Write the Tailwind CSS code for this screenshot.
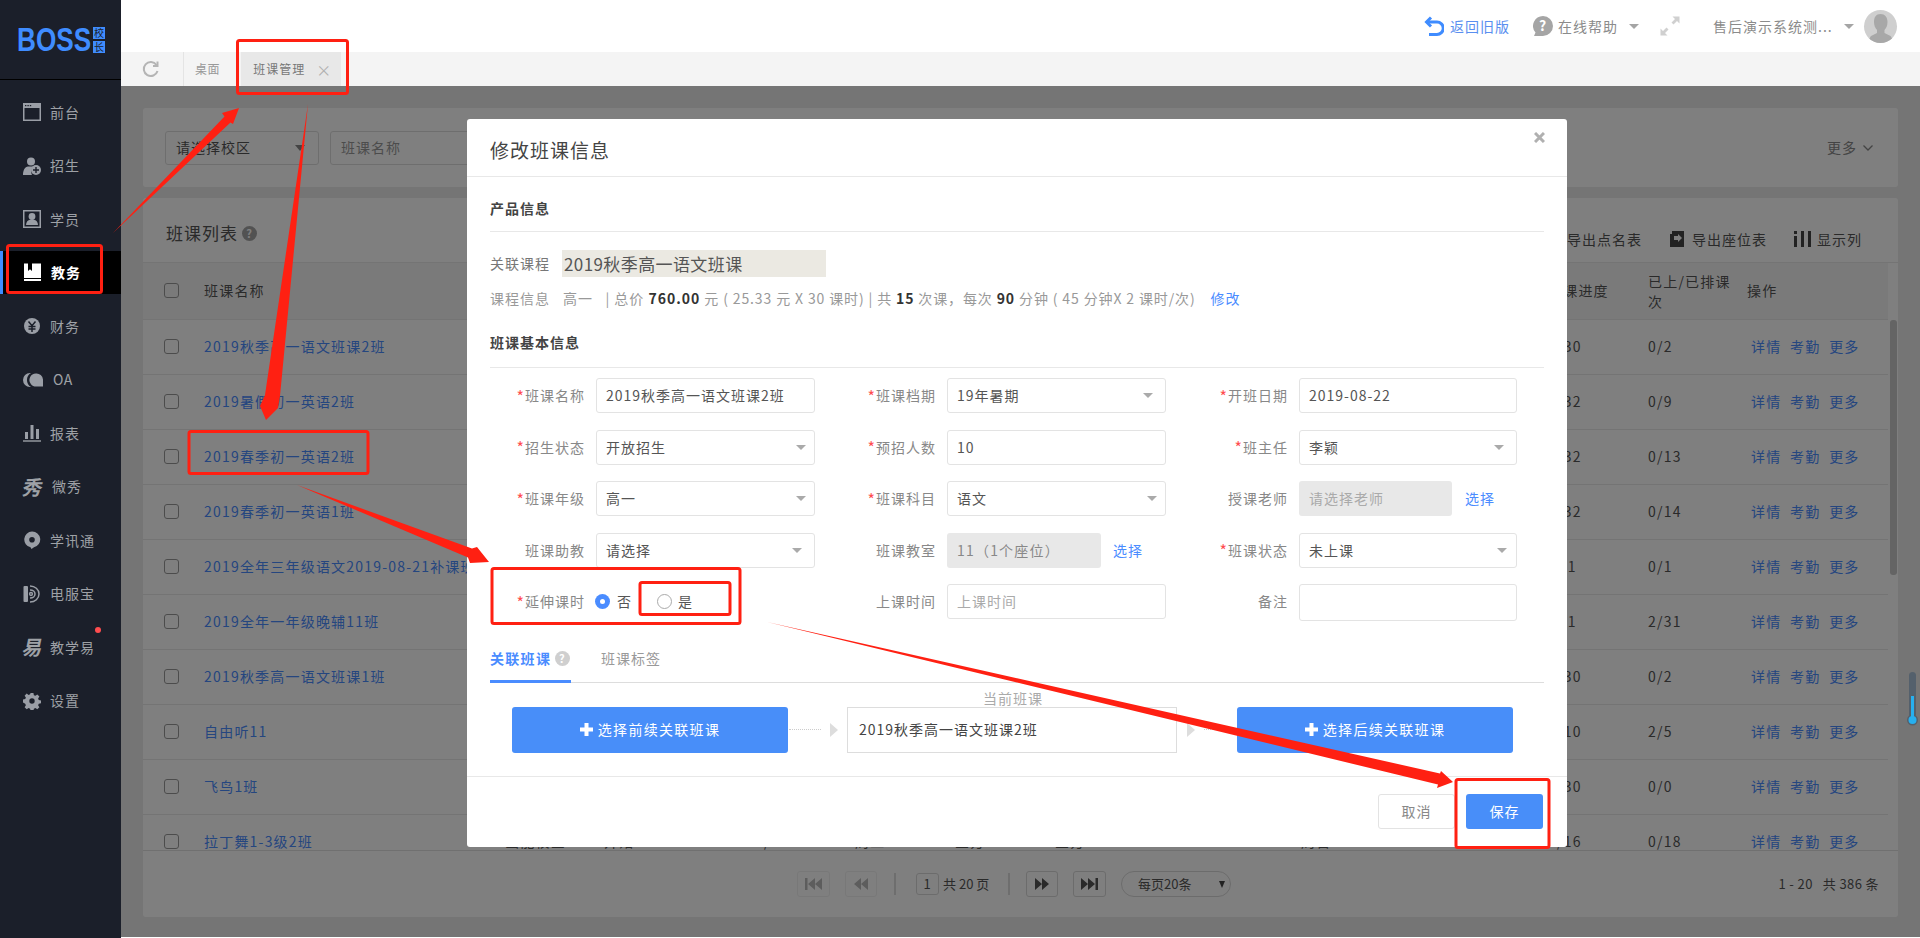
<!doctype html>
<html lang="zh">
<head>
<meta charset="utf-8" />
<title>班课管理</title>
<script src="https://cdn.jsdelivr.net/npm/@tailwindcss/browser@4"></script>
</head>
<body class="bg-white [font-family:'Noto_Sans_CJK_SC','Noto_Sans',sans-serif] text-[14px] tracking-[1px] text-[#555]">
<div class="relative flex h-[938px] w-[1920px] overflow-hidden">

  <!-- sidebar -->
  <aside class="w-[121px] shrink-0 bg-[#1b1f2a] text-[#9ea1a6]">
    <div class="flex h-[80px] items-start gap-[2px] border-b border-black pl-[17px] pt-[27px]">
      <div class="h-[25px] w-[74px]"><span class="block origin-top-left scale-x-[.77] text-[34px] leading-[25px] font-bold tracking-normal whitespace-nowrap text-[#3f8cff] [font-family:'Liberation_Sans',sans-serif]">BOSS</span></div>
      <div class="flex flex-col gap-[2px]">
        <span class="flex size-[12px] items-center justify-center bg-[#3f8cff] text-[10px] leading-none tracking-normal text-[#1b1f2a]">校</span>
        <span class="flex size-[12px] items-center justify-center bg-[#3f8cff] text-[10px] leading-none tracking-normal text-[#1b1f2a]">长</span>
      </div>
    </div>
    <ul class="pt-[10.5px]">
      <li class="mb-[10.5px] flex h-[43px] items-center gap-[9px] pl-[23px]">
        <svg class="size-[18px]" viewBox="0 0 18 18" fill="#9a9ea6"><path d="M0 0h18v18H0zM1.500 5v11.500h15V5z" fill-rule="evenodd"/><g fill="#1b1f2a"><rect x="2" y="2" width="1.400" height="1.200"/><rect x="4.400" y="2" width="1.400" height="1.200"/><rect x="6.800" y="2" width="1.400" height="1.200"/></g></svg>
        <span>前台</span>
      </li>
      <li class="mb-[10.5px] flex h-[43px] items-center gap-[9px] pl-[23px]">
        <svg class="size-[18px]" viewBox="0 0 18 18" fill="#9a9ea6"><circle cx="8" cy="4.500" r="4"/><path d="M0 18c0-5 2-8 5-8.500h5.500C8.500 11 7.500 15 9 18z"/><circle cx="13" cy="13" r="5"/><path d="M12.300 10h1.400v2.300H16v1.400h-2.300V16h-1.400v-2.300H10v-1.400h2.300z" fill="#1b1f2a"/></svg>
        <span>招生</span>
      </li>
      <li class="mb-[10.5px] flex h-[43px] items-center gap-[9px] pl-[23px]">
        <svg class="size-[18px]" viewBox="0 0 18 18" fill="#9a9ea6"><path d="M0 0h18v18H0zM1.500 1.500v15h15v-15z" fill-rule="evenodd"/><circle cx="9" cy="6.500" r="3.400"/><path d="M3 15c0-3 2-5 4-5.200h4c2 .2 4 2.200 4 5.200z"/></svg>
        <span>学员</span>
      </li>
      <li class="relative mb-[10.5px] flex h-[43px] items-center gap-[9px] bg-black pl-[23px] font-bold text-white">
        <span class="absolute top-0 left-0 h-full w-[3px] bg-[#3f8cff]"></span>
        <svg class="size-[19px]" viewBox="0 0 19 18" fill="#fff"><path d="M1 0h17v14.500H1zM5 0v7.500l2-1.800 2 1.800V0z" fill-rule="evenodd"/><rect x="1" y="15.500" width="17" height="2"/></svg>
        <span>教务</span>
      </li>
      <li class="mb-[10.5px] flex h-[43px] items-center gap-[9px] pl-[23px]">
        <svg class="size-[18px]" viewBox="0 0 18 18" fill="#9a9ea6"><circle cx="9" cy="9" r="8"/><path d="M5.500 4.500l3.500 4.200 3.500-4.200M5.500 9.500h7M5.500 12h7M9 8.700V15" stroke="#1b1f2a" stroke-width="1.500" fill="none"/></svg>
        <span>财务</span>
      </li>
      <li class="mb-[10.5px] flex h-[43px] items-center gap-[10px] pl-[23px]">
        <svg class="h-[14px] w-[20px]" viewBox="0 0 20 14" fill="#9a9ea6"><path d="M7 0a7 7 0 0 0 0 14h1A8 8 0 0 1 8 .100z"/><path d="M13 .5a6.500 6.500 0 0 0-5 10.700c1 1.700 3 2.300 5 2.300h7v-7A6.500 6.500 0 0 0 13 .5z"/></svg>
        <span class="tracking-[.5px]">OA</span>
      </li>
      <li class="mb-[10.5px] flex h-[43px] items-center gap-[9px] pl-[23px]">
        <svg class="size-[18px]" viewBox="0 0 18 18" fill="#9a9ea6"><rect x="2" y="8" width="3" height="7"/><rect x="7.500" y="1" width="3" height="14"/><rect x="13" y="5" width="3" height="10"/><rect x="0" y="16.300" width="18" height="1.400"/></svg>
        <span>报表</span>
      </li>
      <li class="mb-[10.5px] flex h-[43px] items-center gap-[9px] pl-[23px]">
        <span class="w-[20px] -skew-x-12 text-[20px] leading-none font-bold tracking-normal">秀</span>
        <span>微秀</span>
      </li>
      <li class="mb-[10.5px] flex h-[43px] items-center gap-[9px] pl-[23px]">
        <svg class="size-[18px]" viewBox="0 0 18 18" fill="#9a9ea6"><path d="M9 .5a8 8 0 0 1 2 15.800L8.500 18l-1-1.700A8 8 0 0 1 9 .5zM9 6a2.800 2.800 0 1 0 0 5.600A2.800 2.800 0 0 0 9 6z" fill-rule="evenodd"/></svg>
        <span>学讯通</span>
      </li>
      <li class="mb-[10.5px] flex h-[43px] items-center gap-[9px] pl-[23px]">
        <svg class="size-[18px]" viewBox="0 0 18 18" fill="none" stroke="#9a9ea6" stroke-width="1.500"><rect x=".5" y="1" width="4.500" height="16" rx="1" fill="#9a9ea6" stroke="none"/><path d="M7 1c5 0 9 3.500 9 8s-4 8-9 8"/><path d="M7 5c3 0 5 1.800 5 4s-2 4-5 4"/><circle cx="8" cy="9" r="1.400"/></svg>
        <span>电服宝</span>
      </li>
      <li class="relative mb-[10.5px] flex h-[43px] items-center gap-[8px] pl-[23px]">
        <span class="w-[19px] -skew-x-12 text-[20px] leading-none font-bold tracking-normal">易</span>
        <span>教学易</span>
        <span class="absolute top-[1px] left-[95px] size-[6px] rounded-full bg-[#ff4d4f]"></span>
      </li>
      <li class="flex h-[43px] items-center gap-[9px] pl-[23px]">
        <svg class="size-[18px]" viewBox="0 0 18 18" fill="#9a9ea6"><path d="M7.400 0h3.200l.5 2.500 1.700.7 2.100-1.400 2.300 2.300-1.400 2.100.7 1.700 2.500.5v3.200l-2.500.5-.7 1.700 1.400 2.100-2.300 2.300-2.100-1.400-1.700.7-.5 2.500H7.400l-.5-2.500-1.700-.7-2.100 1.400-2.300-2.300 1.400-2.100-.7-1.700L-1 10.600V7.400l2.500-.5.700-1.700-1.400-2.100 2.300-2.300 2.100 1.400 1.700-.7zM9 6a3 3 0 1 0 0 6 3 3 0 0 0 0-6z" fill-rule="evenodd" transform="translate(.9 .9) scale(.9)"/></svg>
        <span>设置</span>
      </li>
    </ul>
  </aside>

  <div class="flex h-[937px] min-w-0 flex-1 flex-col">
    <!-- top bar -->
    <header class="flex h-[52px] shrink-0 items-center bg-white text-[#8b8b8b]">
      <svg class="ml-[1303px] h-[20px] w-[20px]" viewBox="0 0 20 20" fill="none" stroke="#3f8cff" stroke-width="3"><path d="M7 1.500L2.500 6 7 10.500"/><path d="M3 6h10a5.500 5.500 0 0 1 0 12.500H5"/></svg>
      <span class="ml-[6px] text-[#5a8ff0]">返回旧版</span>
      <svg class="ml-[23px] size-[20px]" viewBox="0 0 20 20"><path d="M10 0a10 10 0 0 1 0 20H1l1.500-3.500A10 10 0 0 1 10 0z" fill="#a5a5a5"/><text x="10" y="15" font-size="14" font-weight="700" text-anchor="middle" fill="#fff">?</text></svg>
      <span class="ml-[5px]">在线帮助</span>
      <span class="ml-[11px] size-0 border-x-[5px] border-t-[5px] border-x-transparent border-t-[#a5a5a5]"></span>
      <svg class="ml-[21px] size-[20px]" viewBox="0 0 20 20" fill="#d0d0d0"><path d="M19.500.5v7l-2.500-2.500-3.500 3.500-2-2L15 3 12.500.5zM.5 19.500v-7L3 15l3.500-3.500 2 2L5 17l2.500 2.500z"/></svg>
      <span class="ml-[33px] w-[120px] whitespace-nowrap">售后演示系统测...</span>
      <span class="ml-[11px] size-0 border-x-[5px] border-t-[5px] border-x-transparent border-t-[#a5a5a5]"></span>
      <div class="ml-[10px] size-[33px] overflow-hidden rounded-full bg-[#cfcfcf]">
        <svg viewBox="0 0 33 33" fill="#a8a8a8"><path d="M16.500 4c4.500 0 7 3 7 8 0 3-1 6-3 8v3l6 3c1 1 2 3 2 7H5c0-4 1-6 2-7l6-3v-3c-2-2-3-5-3-8 0-5 2-8 6.500-8z"/></svg>
      </div>
    </header>

    <!-- tabs -->
    <nav class="flex h-[34px] shrink-0 items-center bg-[#f4f4f4] text-[12px] tracking-[.6px] text-[#999]">
      <svg class="ml-[21px] size-[18px]" viewBox="0 0 18 18" fill="none" stroke="#b4b4b4" stroke-width="2"><path d="M15.500 11a7 7 0 1 1-1-6"/><path d="M15.500 1.500V6H11" /></svg>
      <span class="ml-[23px] h-full w-px bg-[#e4e4e4]"></span>
      <span class="ml-[11px]">桌面</span>
      <div class="ml-[21px] flex h-full w-[100px] items-center bg-[#e8e8e8] pl-[12px] text-[#777] tracking-[1px]">
        <span>班课管理</span>
        <span class="ml-[11px] text-[15px] leading-none tracking-normal text-[#b0b0b0]">×</span>
      </div>
    </nav>

    <!-- page -->
    <main class="relative flex min-h-0 flex-1 flex-col gap-[11px] bg-[#ebebeb] pt-[22px] pr-[22px] pl-[22px]">
      <section class="flex h-[79px] shrink-0 items-center gap-[11px] rounded-[3px] bg-white pr-[25px] pl-[22px]">
        <div class="flex h-[34px] w-[154px] items-center justify-between rounded-[3px] border border-[#ddd] pr-[13px] pl-[10px]">
          <span>请选择校区</span>
          <span class="size-0 border-x-[5px] border-t-[6px] border-x-transparent border-t-[#888]"></span>
        </div>
        <div class="flex h-[34px] w-[250px] items-center rounded-[3px] border border-[#ddd] pl-[10px] text-[#999]">班课名称</div>
        <div class="ml-auto flex items-center gap-[6px] text-[#888]">更多
          <svg class="h-[6px] w-[10px]" viewBox="0 0 10 6" fill="none" stroke="#888" stroke-width="1.300"><path d="M.5.5L5 5 9.500.5"/></svg>
        </div>
      </section>

      <section class="relative flex h-[719px] shrink-0 flex-col overflow-hidden rounded-[3px] bg-white">
        <div class="flex h-[65px] shrink-0 items-center border-b border-[#e8e8e8] pt-[6px] pl-[23px] text-[#555]">
          <h2 class="text-[17px] font-normal">班课列表</h2>
          <svg class="ml-[4px] size-[15px]" viewBox="0 0 15 15"><circle cx="7.500" cy="7.500" r="7.500" fill="#a5a5a5"/><text x="7.500" y="11.500" font-size="11" font-weight="700" text-anchor="middle" fill="#fff">?</text></svg>
          <div class="flex items-center pt-[12px]">
            <span class="ml-[1310px] whitespace-nowrap">导出点名表</span>
            <svg class="ml-[28px] h-[16px] w-[16px]" viewBox="0 0 16 16"><path d="M2 0h12v16H0V3h2zM4 5v4h4v2l4-4-4-4v2z" fill="#444" fill-rule="evenodd"/></svg>
            <span class="ml-[6px] whitespace-nowrap">导出座位表</span>
            <svg class="ml-[27px] h-[16px] w-[17px]" viewBox="0 0 17 16" fill="#444"><rect x="0" y="5" width="3" height="11"/><rect x="0" y="0" width="3" height="3"/><rect x="7" y="0" width="3" height="16"/><rect x="14" y="0" width="3" height="16"/></svg>
            <span class="ml-[6px] whitespace-nowrap">显示列</span>
          </div>
        </div>
        <div class="min-h-0 flex-1 overflow-hidden">
          <table class="w-[1745px] table-fixed border-collapse text-left tracking-[1.2px]">
            <colgroup><col class="w-[61px]" /><col class="w-[301px]" /><col class="w-[99px]" /><col class="w-[151px]" /><col class="w-[100px]" /><col class="w-[100px]" /><col class="w-[100px]" /><col class="w-[97px]" /><col class="w-[149px]" /><col class="w-[247px]" /><col class="w-[100px]" /><col class="w-[99px]" /><col class="w-[141px]" /></colgroup>
            <thead>
              <tr class="h-[56px] border-b border-[#e8e8e8] bg-[#f5f5f5] text-[#555]">
                <th class="pl-[21px] font-normal"><span class="block size-[15px] rounded-[3px] border border-[#999]"></span></th>
                <th class="font-normal">班课名称</th>
                <th class="font-normal"></th><th class="font-normal"></th><th class="font-normal"></th><th class="font-normal"></th><th class="font-normal"></th><th class="font-normal"></th><th class="font-normal"></th><th class="font-normal"></th>
                <th class="font-normal">排课进度</th>
                <th class="pr-[12px] leading-[20px] font-normal">已上/已排课次</th>
                <th class="font-normal">操作</th>
              </tr>
            </thead>
            <tbody class="text-[#555]">
              <tr class="h-[55px] border-b border-[#e8e8e8]"><td class="pl-[21px]"><span class="block size-[15px] rounded-[3px] border border-[#999]"></span></td><td class="text-[#4a8cff]">2019秋季高一语文班课2班</td><td colspan="8"></td><td>0/30</td><td>0/2</td><td class="pl-[4px] text-[#4a8cff]">详情&nbsp;&nbsp;考勤&nbsp;&nbsp;更多</td></tr>
              <tr class="h-[55px] border-b border-[#e8e8e8]"><td class="pl-[21px]"><span class="block size-[15px] rounded-[3px] border border-[#999]"></span></td><td class="text-[#4a8cff]">2019暑假初一英语2班</td><td colspan="8"></td><td>0/32</td><td>0/9</td><td class="pl-[4px] text-[#4a8cff]">详情&nbsp;&nbsp;考勤&nbsp;&nbsp;更多</td></tr>
              <tr class="h-[55px] border-b border-[#e8e8e8]"><td class="pl-[21px]"><span class="block size-[15px] rounded-[3px] border border-[#999]"></span></td><td class="text-[#4a8cff]">2019春季初一英语2班</td><td colspan="8"></td><td>0/32</td><td>0/13</td><td class="pl-[4px] text-[#4a8cff]">详情&nbsp;&nbsp;考勤&nbsp;&nbsp;更多</td></tr>
              <tr class="h-[55px] border-b border-[#e8e8e8]"><td class="pl-[21px]"><span class="block size-[15px] rounded-[3px] border border-[#999]"></span></td><td class="text-[#4a8cff]">2019春季初一英语1班</td><td colspan="8"></td><td>0/32</td><td>0/14</td><td class="pl-[4px] text-[#4a8cff]">详情&nbsp;&nbsp;考勤&nbsp;&nbsp;更多</td></tr>
              <tr class="h-[55px] border-b border-[#e8e8e8]"><td class="pl-[21px]"><span class="block size-[15px] rounded-[3px] border border-[#999]"></span></td><td class="whitespace-nowrap text-[#4a8cff]">2019全年三年级语文2019-08-21补课班</td><td colspan="8"></td><td class="pl-[4px]">0/1</td><td>0/1</td><td class="pl-[4px] text-[#4a8cff]">详情&nbsp;&nbsp;考勤&nbsp;&nbsp;更多</td></tr>
              <tr class="h-[55px] border-b border-[#e8e8e8]"><td class="pl-[21px]"><span class="block size-[15px] rounded-[3px] border border-[#999]"></span></td><td class="text-[#4a8cff]">2019全年一年级晚辅11班</td><td colspan="8"></td><td class="pl-[4px]">2/1</td><td>2/31</td><td class="pl-[4px] text-[#4a8cff]">详情&nbsp;&nbsp;考勤&nbsp;&nbsp;更多</td></tr>
              <tr class="h-[55px] border-b border-[#e8e8e8]"><td class="pl-[21px]"><span class="block size-[15px] rounded-[3px] border border-[#999]"></span></td><td class="text-[#4a8cff]">2019秋季高一语文班课1班</td><td colspan="8"></td><td>0/30</td><td>0/2</td><td class="pl-[4px] text-[#4a8cff]">详情&nbsp;&nbsp;考勤&nbsp;&nbsp;更多</td></tr>
              <tr class="h-[55px] border-b border-[#e8e8e8]"><td class="pl-[21px]"><span class="block size-[15px] rounded-[3px] border border-[#999]"></span></td><td class="text-[#4a8cff]">自由听11</td><td colspan="8"></td><td>0/10</td><td>2/5</td><td class="pl-[4px] text-[#4a8cff]">详情&nbsp;&nbsp;考勤&nbsp;&nbsp;更多</td></tr>
              <tr class="h-[55px] border-b border-[#e8e8e8]"><td class="pl-[21px]"><span class="block size-[15px] rounded-[3px] border border-[#999]"></span></td><td class="text-[#4a8cff]">飞鸟1班</td><td colspan="8"></td><td>0/30</td><td>0/0</td><td class="pl-[4px] text-[#4a8cff]">详情&nbsp;&nbsp;考勤&nbsp;&nbsp;更多</td></tr>
              <tr class="h-[55px]"><td class="pl-[21px]"><span class="block size-[15px] rounded-[3px] border border-[#999]"></span></td><td class="text-[#4a8cff]">拉丁舞1-3级2班</td><td>画能校区</td><td>开始</td><td>1/20</td><td>周二</td><td>金方</td><td>金方</td><td>2019-09-01</td><td>周日08:00~09:30</td><td>1/16</td><td>0/18</td><td class="pl-[4px] text-[#4a8cff]">详情&nbsp;&nbsp;考勤&nbsp;&nbsp;更多</td></tr>
            </tbody>
          </table>
        </div>
        <!-- pager -->
        <div class="flex h-[67px] shrink-0 items-center border-t border-[#e0e0e0] pr-[19px] text-[13px]">
          <button class="ml-[654px] flex h-[26px] w-[33px] items-center justify-center rounded-[3px] border border-[#f0f0f0]"><svg class="h-[12px] w-[17px]" viewBox="0 0 17 12" fill="#bbb"><rect width="2.500" height="12"/><path d="M10 0v12L3 6zM17 0v12l-7-6z"/></svg></button>
          <button class="ml-[15px] flex h-[26px] w-[32px] items-center justify-center rounded-[3px] border border-[#f0f0f0]"><svg class="h-[12px] w-[14px]" viewBox="0 0 14 12" fill="#bbb"><path d="M7 0v12L0 6zM14 0v12L7 6z"/></svg></button>
          <span class="ml-[17px] h-[22px] w-[2px] bg-[#ddd]"></span>
          <span class="ml-[20px] flex h-[22px] w-[23px] items-center justify-center rounded-[3px] border border-[#d8d8d8]">1</span>
          <span class="ml-[4px] w-[48px] tracking-normal whitespace-nowrap">共 20 页</span>
          <span class="ml-[17px] h-[22px] w-[2px] bg-[#ddd]"></span>
          <button class="ml-[16px] flex h-[26px] w-[32px] items-center justify-center rounded-[3px] border border-[#d8d8d8]"><svg class="h-[12px] w-[14px]" viewBox="0 0 14 12" fill="#555"><path d="M0 0v12l7-6zM7 0v12l7-6z"/></svg></button>
          <button class="ml-[15px] flex h-[26px] w-[33px] items-center justify-center rounded-[3px] border border-[#d8d8d8]"><svg class="h-[12px] w-[17px]" viewBox="0 0 17 12" fill="#555"><path d="M0 0v12l7-6zM7 0v12l7-6z"/><rect x="14.500" width="2.500" height="12"/></svg></button>
          <div class="ml-[15px] flex h-[26px] w-[110px] items-center rounded-full border border-[#d8d8d8] pl-[16px] tracking-normal"><span>每页20条</span><span class="ml-[28px] size-0 border-x-[3.500px] border-t-[7px] border-x-transparent border-t-[#444]"></span></div>
          <span class="ml-auto tracking-[.4px] whitespace-nowrap">1 - 20 &nbsp; 共 386 条</span>
        </div>
        <span class="absolute top-[122px] right-[1px] h-[255px] w-[7px] rounded-[3px] bg-[#c8c8c8]"></span>
      </section>

      <div class="absolute inset-0 bg-black/50"></div>

      <!-- dialog -->
      <div class="absolute top-[33px] left-[346px] flex h-[728px] w-[1100px] flex-col rounded-[3px] bg-white">
        <div class="relative flex h-[58px] shrink-0 items-center border-b border-[#e8e8e8] pt-[6px] pl-[23px]">
          <h2 class="text-[19px] font-normal text-[#444]">修改班课信息</h2>
          <svg class="absolute top-[13px] right-[22px] size-[11px]" viewBox="0 0 11 11" stroke="#b0b0b0" stroke-width="3"><path d="M1 1l9 9M10 1l-9 9"/></svg>
        </div>
        <div class="flex-1 px-[23px]">
          <h3 class="flex h-[55px] items-center border-b border-[#e8e8e8] pt-[8px] font-bold text-[#444]">产品信息</h3>
          <div class="mt-[18px] flex h-[27px] items-center text-[#777]">
            <span class="w-[72px]">关联课程</span>
            <span class="flex h-[27px] w-[264px] items-center bg-[#ebe9e2] pl-[2px] text-[17px] tracking-[.4px] text-[#555]">2019秋季高一语文班课</span>
          </div>
          <div class="mt-[11px] flex h-[20px] items-center whitespace-nowrap text-[#999]">
            <span class="w-[73px]">课程信息</span>
            <span>高一 &nbsp; | 总价 <b class="font-bold text-[#333]">760.00</b><span class="tracking-[.87px]"> 元 ( 25.33 元 X 30 课时) | 共 <b class="font-bold text-[#333]">15</b> 次课，每次 <b class="font-bold text-[#333]">90</b> 分钟 ( 45 分钟X 2 课时/次)</span></span>
            <span class="ml-[15px] text-[#4a8cff]">修改</span>
          </div>
          <h3 class="flex h-[60px] items-center border-b border-[#e8e8e8] pt-[10px] font-bold text-[#444]">班课基本信息</h3>

          <div class="mt-[10px] grid grid-cols-[351px_352px_1fr] auto-rows-[51.5px] text-[#555]">
            <div class="flex items-start"><label class="mr-[11px] flex h-[35px] w-[95px] items-center justify-end text-[#888]"><span class="text-[16px] text-[#ff4d4f]">*</span>班课名称</label><span class="flex h-[35px] w-[219px] items-center rounded-[3px] border border-[#e3e3e3] pl-[9px] whitespace-nowrap">2019秋季高一语文班课2班</span></div>
            <div class="flex items-start"><label class="mr-[11px] flex h-[35px] w-[95px] items-center justify-end text-[#888]"><span class="text-[16px] text-[#ff4d4f]">*</span>班课档期</label><span class="flex h-[35px] w-[219px] items-center justify-between rounded-[3px] border border-[#e3e3e3] pr-[12px] pl-[9px]">19年暑期<i class="size-0 border-x-[5px] border-t-[5px] border-x-transparent border-t-[#aaa]"></i></span></div>
            <div class="flex items-start"><label class="mr-[11px] flex h-[35px] w-[95px] items-center justify-end text-[#888]"><span class="text-[16px] text-[#ff4d4f]">*</span>开班日期</label><span class="flex h-[35px] w-[218px] items-center rounded-[3px] border border-[#e3e3e3] pl-[9px]">2019-08-22</span></div>

            <div class="flex items-start"><label class="mr-[11px] flex h-[35px] w-[95px] items-center justify-end text-[#888]"><span class="text-[16px] text-[#ff4d4f]">*</span>招生状态</label><span class="flex h-[35px] w-[219px] items-center justify-between rounded-[3px] border border-[#e3e3e3] pr-[8px] pl-[9px]">开放招生<i class="size-0 border-x-[5px] border-t-[5px] border-x-transparent border-t-[#aaa]"></i></span></div>
            <div class="flex items-start"><label class="mr-[11px] flex h-[35px] w-[95px] items-center justify-end text-[#888]"><span class="text-[16px] text-[#ff4d4f]">*</span>预招人数</label><span class="flex h-[35px] w-[219px] items-center rounded-[3px] border border-[#e3e3e3] pl-[9px]">10</span></div>
            <div class="flex items-start"><label class="mr-[11px] flex h-[35px] w-[95px] items-center justify-end text-[#888]"><span class="text-[16px] text-[#ff4d4f]">*</span>班主任</label><span class="flex h-[35px] w-[218px] items-center justify-between rounded-[3px] border border-[#e3e3e3] pr-[12px] pl-[9px]">李颖<i class="size-0 border-x-[5px] border-t-[5px] border-x-transparent border-t-[#aaa]"></i></span></div>

            <div class="flex items-start"><label class="mr-[11px] flex h-[35px] w-[95px] items-center justify-end text-[#888]"><span class="text-[16px] text-[#ff4d4f]">*</span>班课年级</label><span class="flex h-[35px] w-[219px] items-center justify-between rounded-[3px] border border-[#e3e3e3] pr-[8px] pl-[9px]">高一<i class="size-0 border-x-[5px] border-t-[5px] border-x-transparent border-t-[#aaa]"></i></span></div>
            <div class="flex items-start"><label class="mr-[11px] flex h-[35px] w-[95px] items-center justify-end text-[#888]"><span class="text-[16px] text-[#ff4d4f]">*</span>班课科目</label><span class="flex h-[35px] w-[219px] items-center justify-between rounded-[3px] border border-[#e3e3e3] pr-[8px] pl-[9px]">语文<i class="size-0 border-x-[5px] border-t-[5px] border-x-transparent border-t-[#aaa]"></i></span></div>
            <div class="flex items-start"><label class="mr-[11px] flex h-[35px] w-[95px] items-center justify-end text-[#888]">授课老师</label><span class="flex h-[35px] w-[153px] items-center rounded-[3px] bg-[#e8e8e8] pl-[10px] text-[#aaa]">请选择老师</span><span class="ml-[13px] flex h-[35px] items-center text-[#4a8cff]">选择</span></div>

            <div class="flex items-start"><label class="mr-[11px] flex h-[35px] w-[95px] items-center justify-end text-[#888]">班课助教</label><span class="flex h-[35px] w-[219px] items-center justify-between rounded-[3px] border border-[#e3e3e3] pr-[12px] pl-[9px]">请选择<i class="size-0 border-x-[5px] border-t-[5px] border-x-transparent border-t-[#aaa]"></i></span></div>
            <div class="flex items-start"><label class="mr-[11px] flex h-[35px] w-[95px] items-center justify-end text-[#888]">班课教室</label><span class="flex h-[35px] w-[154px] items-center rounded-[3px] bg-[#e8e8e8] pl-[10px] tracking-[1.2px] whitespace-nowrap text-[#888]">11（1个座位）</span><span class="ml-[12px] flex h-[35px] items-center text-[#4a8cff]">选择</span></div>
            <div class="flex items-start"><label class="mr-[11px] flex h-[35px] w-[95px] items-center justify-end text-[#888]"><span class="text-[16px] text-[#ff4d4f]">*</span>班课状态</label><span class="flex h-[35px] w-[218px] items-center justify-between rounded-[3px] border border-[#e3e3e3] pr-[9px] pl-[9px]">未上课<i class="size-0 border-x-[5px] border-t-[5px] border-x-transparent border-t-[#aaa]"></i></span></div>

            <div class="flex items-start"><label class="mr-[10px] flex h-[35px] w-[95px] items-center justify-end text-[#888]"><span class="text-[16px] text-[#ff4d4f]">*</span>延伸课时</label>
              <div class="flex h-[35px] items-center">
                <span class="flex size-[15px] items-center justify-center rounded-full bg-[#4a8cff]"><i class="size-[5px] rounded-full bg-white"></i></span>
                <span class="ml-[7px]">否</span>
                <span class="ml-[25px] size-[15px] rounded-full border border-[#aaa]"></span>
                <span class="ml-[6px]">是</span>
              </div>
            </div>
            <div class="flex items-start"><label class="mr-[11px] flex h-[35px] w-[95px] items-center justify-end text-[#888]">上课时间</label><span class="flex h-[35px] w-[219px] items-center rounded-[3px] border border-[#e3e3e3] pl-[9px] text-[#aaa]">上课时间</span></div>
            <div class="flex items-start"><label class="mr-[11px] flex h-[35px] w-[95px] items-center justify-end text-[#888]">备注</label><span class="h-[37px] w-[218px] rounded-[3px] border border-[#e3e3e3]"></span></div>
          </div>

          <div class="flex h-[47px] items-start border-b border-[#ddd] pt-[12px]">
            <div class="flex h-[35px] w-[81px] items-start border-b-[3px] border-[#4a8cff] font-bold tracking-[1.3px] whitespace-nowrap text-[#4a8cff]">关联班课<svg class="mt-[3px] ml-[4px] size-[15px] shrink-0" viewBox="0 0 15 15"><circle cx="7.500" cy="7.500" r="7.500" fill="#cfcfcf"/><text x="7.500" y="11.500" font-size="11" font-weight="700" text-anchor="middle" fill="#fff">?</text></svg></div>
            <span class="ml-[30px] text-[#999]">班课标签</span>
          </div>

          <div class="mt-[24px] flex h-[46px] items-center pl-[22px]">
            <button class="flex h-[46px] w-[276px] items-center justify-center gap-[5px] rounded-[3px] bg-[#488ef9] tracking-[1.3px] text-white"><svg class="size-[13px]" viewBox="0 0 13 13" fill="#fff"><path d="M4.500 0h4v4.500H13v4H8.500V13h-4V8.500H0v-4h4.500z"/></svg>选择前续关联班课</button>
            <span class="ml-[1px] w-[32px] border-t border-dotted border-[#ccc]"></span>
            <span class="ml-[9px] size-0 border-y-[7px] border-l-[8px] border-y-transparent border-l-[#ddd]"></span>
            <div class="relative ml-[9px] flex h-[46px] w-[330px] items-center border border-[#ddd] pl-[11px] text-[#444]">2019秋季高一语文班课2班
              <span class="absolute -top-[19px] left-[135px] text-[14px] leading-[18px] text-[#aaa]">当前班课</span>
            </div>
            <span class="ml-[10px] size-0 border-y-[7px] border-l-[8px] border-y-transparent border-l-[#ddd]"></span>
            <span class="ml-[9px] w-[33px] border-t border-dotted border-[#ccc]"></span>
            <button class="flex h-[46px] w-[276px] items-center justify-center gap-[5px] rounded-[3px] bg-[#488ef9] tracking-[1.3px] text-white"><svg class="size-[13px]" viewBox="0 0 13 13" fill="#fff"><path d="M4.500 0h4v4.500H13v4H8.500V13h-4V8.500H0v-4h4.500z"/></svg>选择后续关联班课</button>
          </div>
        </div>
        <div class="flex h-[71px] shrink-0 items-start justify-end gap-[11px] border-t border-[#e8e8e8] px-[24px] pt-[17px]">
          <button class="h-[35px] w-[77px] rounded-[3px] border border-[#e3e3e3] text-[#888]">取消</button>
          <button class="h-[35px] w-[77px] rounded-[3px] bg-[#488ef9] text-white">保存</button>
        </div>
      </div>
    </main>
  </div>

  <!-- thermometer widget -->
  <svg class="absolute top-[672px] right-[2px] h-[55px] w-[11px]" viewBox="0 0 11 55"><rect x="2" y="0" width="7" height="46" rx="3.500" fill="#54606c"/><circle cx="5.500" cy="48" r="5.500" fill="#54606c"/><rect x="4" y="24" width="3" height="24" fill="#27b0ef"/><circle cx="5.500" cy="48" r="4" fill="#27b0ef"/></svg>

  <!-- red annotations drawn on the screenshot -->
  <svg class="pointer-events-none absolute top-0 left-0 h-[938px] w-[1920px]" viewBox="0 0 1920 938" fill="none">
    <g stroke="#ff2012" stroke-width="3">
      <rect x="237.500" y="40.500" width="110" height="53" rx="2"/>
      <rect x="7.500" y="245.500" width="94" height="47" rx="2"/>
      <rect x="189" y="431.500" width="179" height="42" rx="2"/>
      <rect x="492" y="568.500" width="248" height="55" rx="2"/>
      <rect x="640" y="582.500" width="90" height="32" rx="2"/>
      <rect x="1456" y="779.500" width="93" height="68" rx="2"/>
    </g>
    <g fill="#ff2012">
      <polygon points="113,233 224.500,116.500 222,113 239,108 233,124 230.500,122.500"/>
      <polygon points="308,104 280,396 278,408 266,420 260,406 265,395"/>
      <polygon points="297,485 472,548.600 477,547 489,562 470,563 468,557.600"/>
      <polygon points="767,622 1440,773.500 1441,771 1453,782 1437,788 1438,784.500"/>
    </g>
  </svg>
</div>
</body>
</html>
